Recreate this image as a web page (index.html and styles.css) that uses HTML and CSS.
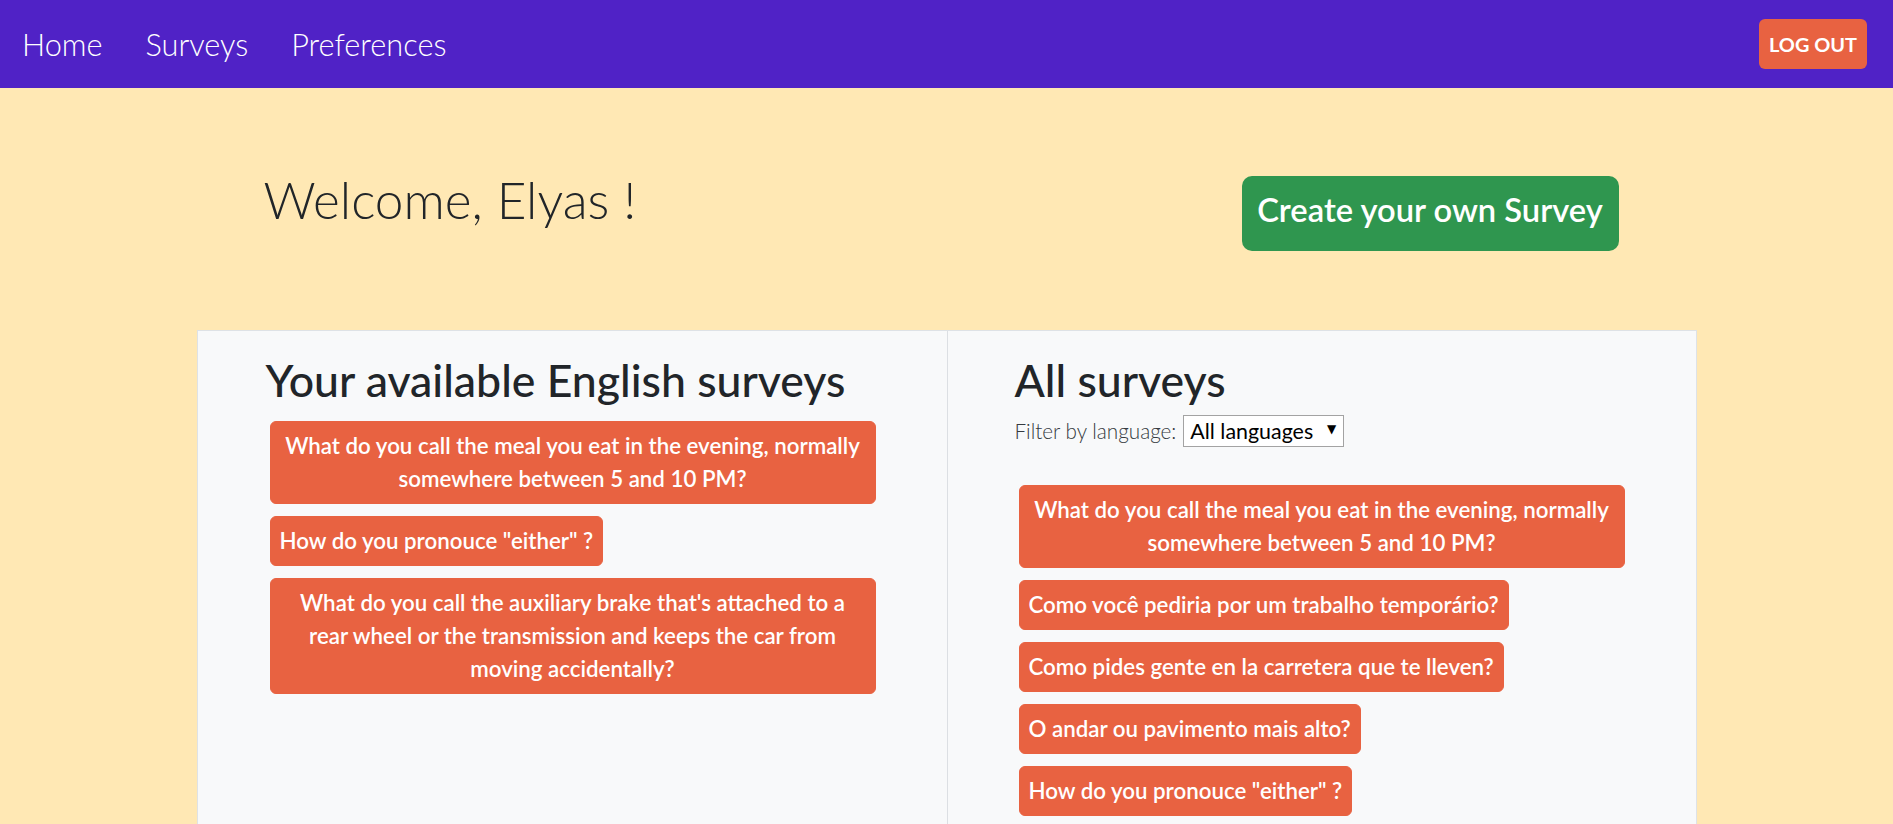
FILE: index.html
```html
<!DOCTYPE html>
<html lang="en">
<head>
<meta charset="utf-8">
<title>Surveys</title>
<link rel="stylesheet" href="styles.css">
</head>
<body>
<nav class="topbar">
  <div class="nav-links">
    <a class="nav-link" href="#">Home</a>
    <a class="nav-link" href="#">Surveys</a>
    <a class="nav-link" href="#">Preferences</a>
  </div>
  <button class="logout">LOG OUT</button>
</nav>
<main class="container">
  <div class="welcome-row">
    <h1 class="welcome">Welcome, Elyas !</h1>
    <button class="create-btn">Create your own Survey</button>
  </div>
  <section class="card">
    <div class="col">
      <h2 class="col-title">Your available English surveys</h2>
      <div class="survey-list list-left">
        <button class="survey">What do you call the meal you eat in the evening, normally somewhere between 5 and 10 PM?</button>
        <button class="survey">How do you pronouce "either" ?</button>
        <button class="survey">What do you call the auxiliary brake that's attached to a rear wheel or the transmission and keeps the car from moving accidentally?</button>
      </div>
    </div>
    <div class="col col-right">
      <h2 class="col-title">All surveys</h2>
      <div class="filter">
        <span class="filter-label">Filter by language:</span>
        <span class="select-wrap">
          <select class="lang-select">
            <option>All languages</option>
            <option>English</option>
            <option>Português</option>
            <option>Español</option>
          </select>
        </span>
      </div>
      <div class="survey-list list-right">
        <button class="survey">What do you call the meal you eat in the evening, normally somewhere between 5 and 10 PM?</button>
        <button class="survey">Como você pediria por um trabalho temporário?</button>
        <button class="survey">Como pides gente en la carretera que te lleven?</button>
        <button class="survey">O andar ou pavimento mais alto?</button>
        <button class="survey">How do you pronouce "either" ?</button>
      </div>
    </div>
  </section>
</main>
</body>
</html>
```
FILE: styles.css
```css
* { box-sizing: border-box; }

body {
  margin: 0;
  background: #ffe8b4;
  font-family: "Lato", "Open Sans", sans-serif;
  color: #212529;
}

.topbar {
  height: 88px;
  background: #5022c6;
  display: flex;
  align-items: center;
  justify-content: space-between;
  padding: 0 26px 0 22px;
}

.nav-links {
  display: flex;
  gap: 43px;
  align-items: center;
}

.nav-link {
  color: #ffffff;
  text-decoration: none;
  font-weight: 300;
  font-size: 30.7px;
  line-height: 1.2;
  padding-top: 3px;
}

.logout {
  width: 108px;
  height: 50px;
  background: #e86241;
  color: #ffffff;
  border: none;
  border-radius: 6px;
  font-family: "Lato", sans-serif;
  font-weight: 700;
  font-size: 19.9px;
  padding: 0;
  margin-top: -1px;
}

.container {
  width: 1500px;
  margin: 0 auto;
  padding-top: 81px;
  padding-bottom: 40px;
}

.welcome-row {
  display: flex;
  justify-content: space-between;
  align-items: flex-start;
  padding: 0 78px 0 67px;
}

.welcome {
  margin: 0;
  font-weight: 300;
  font-size: 51.3px;
  line-height: 1.2;
  color: #212529;
}

.create-btn {
  margin-top: 7px;
  width: 377px;
  height: 75px;
  background: #2f964f;
  color: #ffffff;
  border: none;
  border-radius: 10px;
  font-family: "Lato", sans-serif;
  font-weight: 600;
  font-size: 32.7px;
  line-height: 1.5;
  padding: 0 0 7px 0;
}

.card {
  margin-top: 79px;
  background: #f8f9fa;
  border: 1px solid #dee2e6;
  display: grid;
  grid-template-columns: 1fr 1fr;
}

.col {
  padding: 22px 67px 40px 68px;
}

.col-right {
  border-left: 1px solid #dcdfe3;
  padding-left: 67px;
}

.col-title {
  margin: 0;
  font-weight: 500;
  font-size: 44.6px;
  line-height: 1.2;
  color: #212529;
}

.filter {
  margin-top: 8px;
  height: 32px;
  display: flex;
  align-items: center;
  gap: 7px;
}

.filter-label {
  font-weight: 300;
  font-size: 20.7px;
  color: #343a40;
}

.select-wrap {
  position: relative;
  display: inline-block;
}

.select-wrap::after {
  content: "\25BC";
  position: absolute;
  right: 8px;
  top: 7px;
  font-family: "DejaVu Sans", sans-serif;
  font-size: 12px;
  color: #000000;
  pointer-events: none;
}

.lang-select {
  appearance: none;
  -webkit-appearance: none;
  width: 161px;
  height: 32px;
  border: 1px solid #a3a3a3;
  border-radius: 0;
  background: #ffffff;
  color: #000000;
  font-family: "Lato", sans-serif;
  font-size: 21.4px;
  padding: 0 0 0 6px;
}

.survey-list {
  display: flex;
  flex-direction: column;
  align-items: flex-start;
  gap: 12px;
  padding: 0 4px;
}

.list-left { margin-top: 14px; }
.list-right { margin-top: 38px; }

.survey {
  background: #e86241;
  color: #ffffff;
  border: 1px solid #e86241;
  border-radius: 6px;
  font-family: "Lato", sans-serif;
  font-weight: 600;
  font-size: 22.3px;
  line-height: 33px;
  padding: 7.5px 9px;
  text-align: center;
  max-width: 100%;
}
```
